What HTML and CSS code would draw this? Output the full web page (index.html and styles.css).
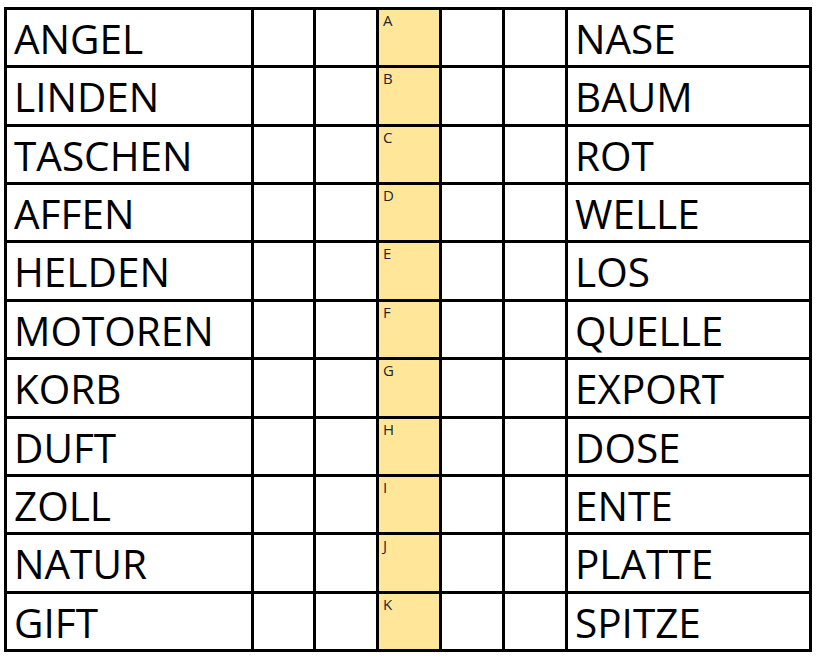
FILE: index.html
```html
<!DOCTYPE html>
<html lang="de">
<head>
<meta charset="utf-8">
<title>Wortpaare</title>
<link rel="stylesheet" href="styles.css">
</head>
<body>
<div class="grid">
  <div class="word">ANGEL</div><div class="cell"></div><div class="cell"></div><div class="key">A</div><div class="cell"></div><div class="cell"></div><div class="word">NASE</div>
  <div class="word">LINDEN</div><div class="cell"></div><div class="cell"></div><div class="key">B</div><div class="cell"></div><div class="cell"></div><div class="word">BAUM</div>
  <div class="word">TASCHEN</div><div class="cell"></div><div class="cell"></div><div class="key">C</div><div class="cell"></div><div class="cell"></div><div class="word">ROT</div>
  <div class="word">AFFEN</div><div class="cell"></div><div class="cell"></div><div class="key">D</div><div class="cell"></div><div class="cell"></div><div class="word">WELLE</div>
  <div class="word">HELDEN</div><div class="cell"></div><div class="cell"></div><div class="key">E</div><div class="cell"></div><div class="cell"></div><div class="word">LOS</div>
  <div class="word">MOTOREN</div><div class="cell"></div><div class="cell"></div><div class="key">F</div><div class="cell"></div><div class="cell"></div><div class="word">QUELLE</div>
  <div class="word">KORB</div><div class="cell"></div><div class="cell"></div><div class="key">G</div><div class="cell"></div><div class="cell"></div><div class="word">EXPORT</div>
  <div class="word">DUFT</div><div class="cell"></div><div class="cell"></div><div class="key">H</div><div class="cell"></div><div class="cell"></div><div class="word">DOSE</div>
  <div class="word">ZOLL</div><div class="cell"></div><div class="cell"></div><div class="key">I</div><div class="cell"></div><div class="cell"></div><div class="word">ENTE</div>
  <div class="word">NATUR</div><div class="cell"></div><div class="cell"></div><div class="key">J</div><div class="cell"></div><div class="cell"></div><div class="word">PLATTE</div>
  <div class="word">GIFT</div><div class="cell"></div><div class="cell"></div><div class="key">K</div><div class="cell"></div><div class="cell"></div><div class="word">SPITZE</div>
</div>
</body>
</html>
```
FILE: styles.css
```css
html, body {
  margin: 0;
  padding: 0;
  background: #ffffff;
}
body {
  padding: 7px 0 0 4px;
  font-family: "Open Sans", "Noto Sans", sans-serif;
}
.grid {
  box-sizing: border-box;
  width: 808px;
  height: 645px;
  padding: 3px;
  background: #000000;
  display: grid;
  grid-template-columns: 244px 59px 60px 60px 60px 60px 241px;
  grid-template-rows: repeat(11, 1fr);
  gap: 3px;
}
.cell, .word, .key {
  background: #ffffff;
  overflow: hidden;
}
.word {
  font-size: 40.5px;
  line-height: 1;
  padding: 9px 0 0 7px;
  color: #000000;
}
.key {
  background: #ffe699;
  font-size: 15px;
  line-height: 1;
  padding: 3px 0 0 4px;
  color: #1c2733;
}
```
